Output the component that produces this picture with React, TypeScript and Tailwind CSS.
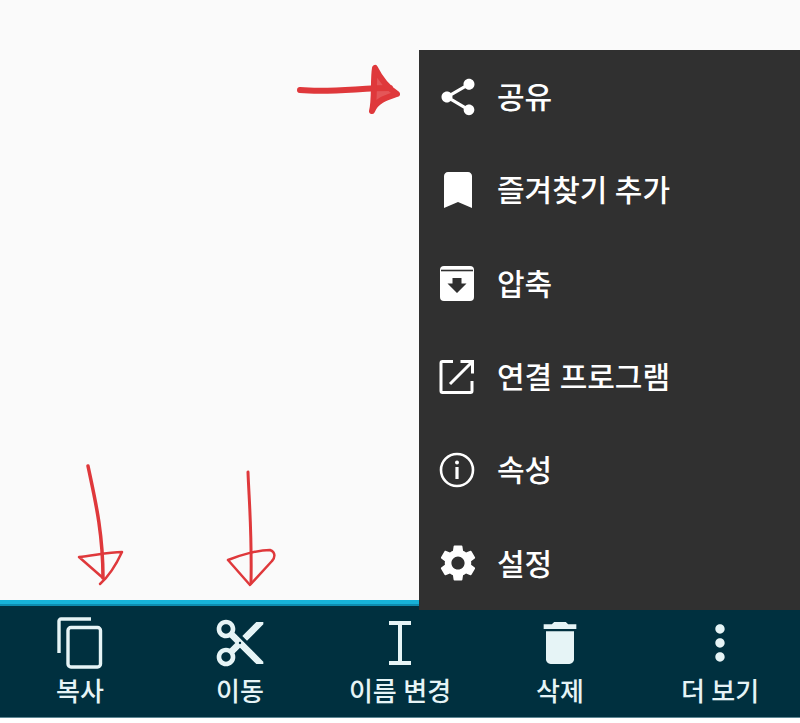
import { MdBookmark, MdContentCut, MdDelete, MdMoreVert, MdSettings, MdShare } from 'react-icons/md'

function ArchiveIcon() {
  return (
    <svg viewBox="0 0 36 36" className="w-[36px] h-[36px] -ml-[2px]" fill="none">
      <path d="M5 1h26a4 4 0 0 1 4 4v27a4 4 0 0 1-4 4H5a4 4 0 0 1-4-4V5a4 4 0 0 1 4-4z" fill="#fff" />
      <path d="M2 5.500h32" stroke="#303030" strokeWidth="1.600" />
      <path d="M13.500 13h9v5.500h5L18 28 8.500 18.500h5z" fill="#303030" />
    </svg>
  )
}

function OpenWithIcon() {
  return (
    <svg viewBox="0 0 36 36" className="w-[36px] h-[36px] -ml-[2px]" fill="none" stroke="#fff" strokeWidth="3">
      <path d="M14 2.500H3.500a1.500 1.500 0 0 0-1.500 1.500v28a1.500 1.500 0 0 0 1.500 1.500h28a1.500 1.500 0 0 0 1.500-1.500V22" />
      <path d="M21.500 2.500H33.500V14.500" />
      <path d="M33 3 11 25" />
    </svg>
  )
}

function InfoIcon() {
  return (
    <svg viewBox="0 0 36 36" className="w-[36px] h-[36px] -ml-[2px]" fill="#fff">
      <circle cx="18" cy="18" r="16" fill="none" stroke="#fff" strokeWidth="2.600" />
      <circle cx="18" cy="10.500" r="2" />
      <rect x="16.400" y="15" width="3.200" height="12" />
    </svg>
  )
}

function CopyIcon() {
  return (
    <svg viewBox="0 0 46 52" className="w-[46px] h-[52px]" fill="none" stroke="#e6f4f6" strokeWidth="3.400">
      <path d="M2 36V4a2 2 0 0 1 2-2h30" />
      <rect x="11" y="10.500" width="32.500" height="39.500" rx="3" />
    </svg>
  )
}

function CursorIcon() {
  return (
    <svg viewBox="0 0 24 44" className="w-[24px] h-[44px]" fill="none" stroke="#e6f4f6" strokeWidth="4">
      <path d="M1 2h22M1 42h22M12 2v40" />
    </svg>
  )
}

const menuItems = [
  { label: '공유', icon: <MdShare className="w-[44px] h-[44px]" /> },
  { label: '즐겨찾기 추가', icon: <MdBookmark className="w-[48px] h-[48px]" /> },
  { label: '압축', icon: <ArchiveIcon /> },
  { label: '연결 프로그램', icon: <OpenWithIcon /> },
  { label: '속성', icon: <InfoIcon /> },
  { label: '설정', icon: <MdSettings className="w-[44px] h-[44px]" /> },
]

const barItems = [
  { label: '복사', icon: <CopyIcon /> },
  { label: '이동', icon: <MdContentCut className="w-[56px] h-[56px]" /> },
  { label: '이름 변경', icon: <CursorIcon /> },
  { label: '삭제', icon: <MdDelete className="w-[56px] h-[56px]" /> },
  { label: '더 보기', icon: <MdMoreVert className="w-[56px] h-[56px]" /> },
]

export default function App() {
  return (
    <div
      className="relative flex flex-col w-[800px] h-[723px] overflow-hidden bg-white"
      style={{ fontFamily: '"Roboto", "Noto Sans CJK KR", sans-serif' }}
    >
      <div className="flex-1 bg-[#fafafa]" />
      <div className="h-[6px] bg-[#17b3d9] border-b-2 border-[#0e8db0]" />
      <div className="grid grid-cols-5 h-[112px] bg-[#00303f] text-[#e6f4f6] border-b border-[#5d8794]">
        {barItems.map((item) => (
          <div key={item.label} className="flex flex-col items-center">
            <div className="flex items-center justify-center h-[64px] mt-[5px]">{item.icon}</div>
            <span className="text-[26px] leading-[32px] font-medium pt-[1px]">{item.label}</span>
          </div>
        ))}
      </div>
      <div className="h-[5px] bg-white" />

      <div className="absolute left-[419px] top-[50px] w-[381px] h-[560px] bg-[#303030] text-white flex flex-col">
        {menuItems.map((item) => (
          <div key={item.label} className="flex items-center flex-1">
            <div className="flex items-center justify-center w-[78px]">{item.icon}</div>
            <span className="text-[30px] font-medium pt-[2px]">{item.label}</span>
          </div>
        ))}
      </div>

      <svg className="absolute left-0 top-0 w-[800px] h-[723px] pointer-events-none" viewBox="0 0 800 723" fill="none" stroke="#df383b" strokeLinecap="round" strokeLinejoin="round">
        <path d="M300 90C330 93 360 88 390 88" strokeWidth="6" />
        <path d="M375 68C373 80 375 100 372 111C376 100 388 97 397 94C388 88 380 78 375 68z" fill="#df383b" fillOpacity="0.85" strokeWidth="6" />
        <path d="M88 466C94 495 103 530 103 578" strokeWidth="3.500" />
        <path d="M79 557C92 556 108 552 122 552C116 565 108 577 100 584M79 557L103 578" strokeWidth="2.500" />
        <path d="M248 472C249 500 252 530 251 583" strokeWidth="3" />
        <path d="M228 560C240 555 258 550 270 550C276 552 275 558 272 561L250 585L228 560z" strokeWidth="2.500" />
      </svg>
    </div>
  )
}
